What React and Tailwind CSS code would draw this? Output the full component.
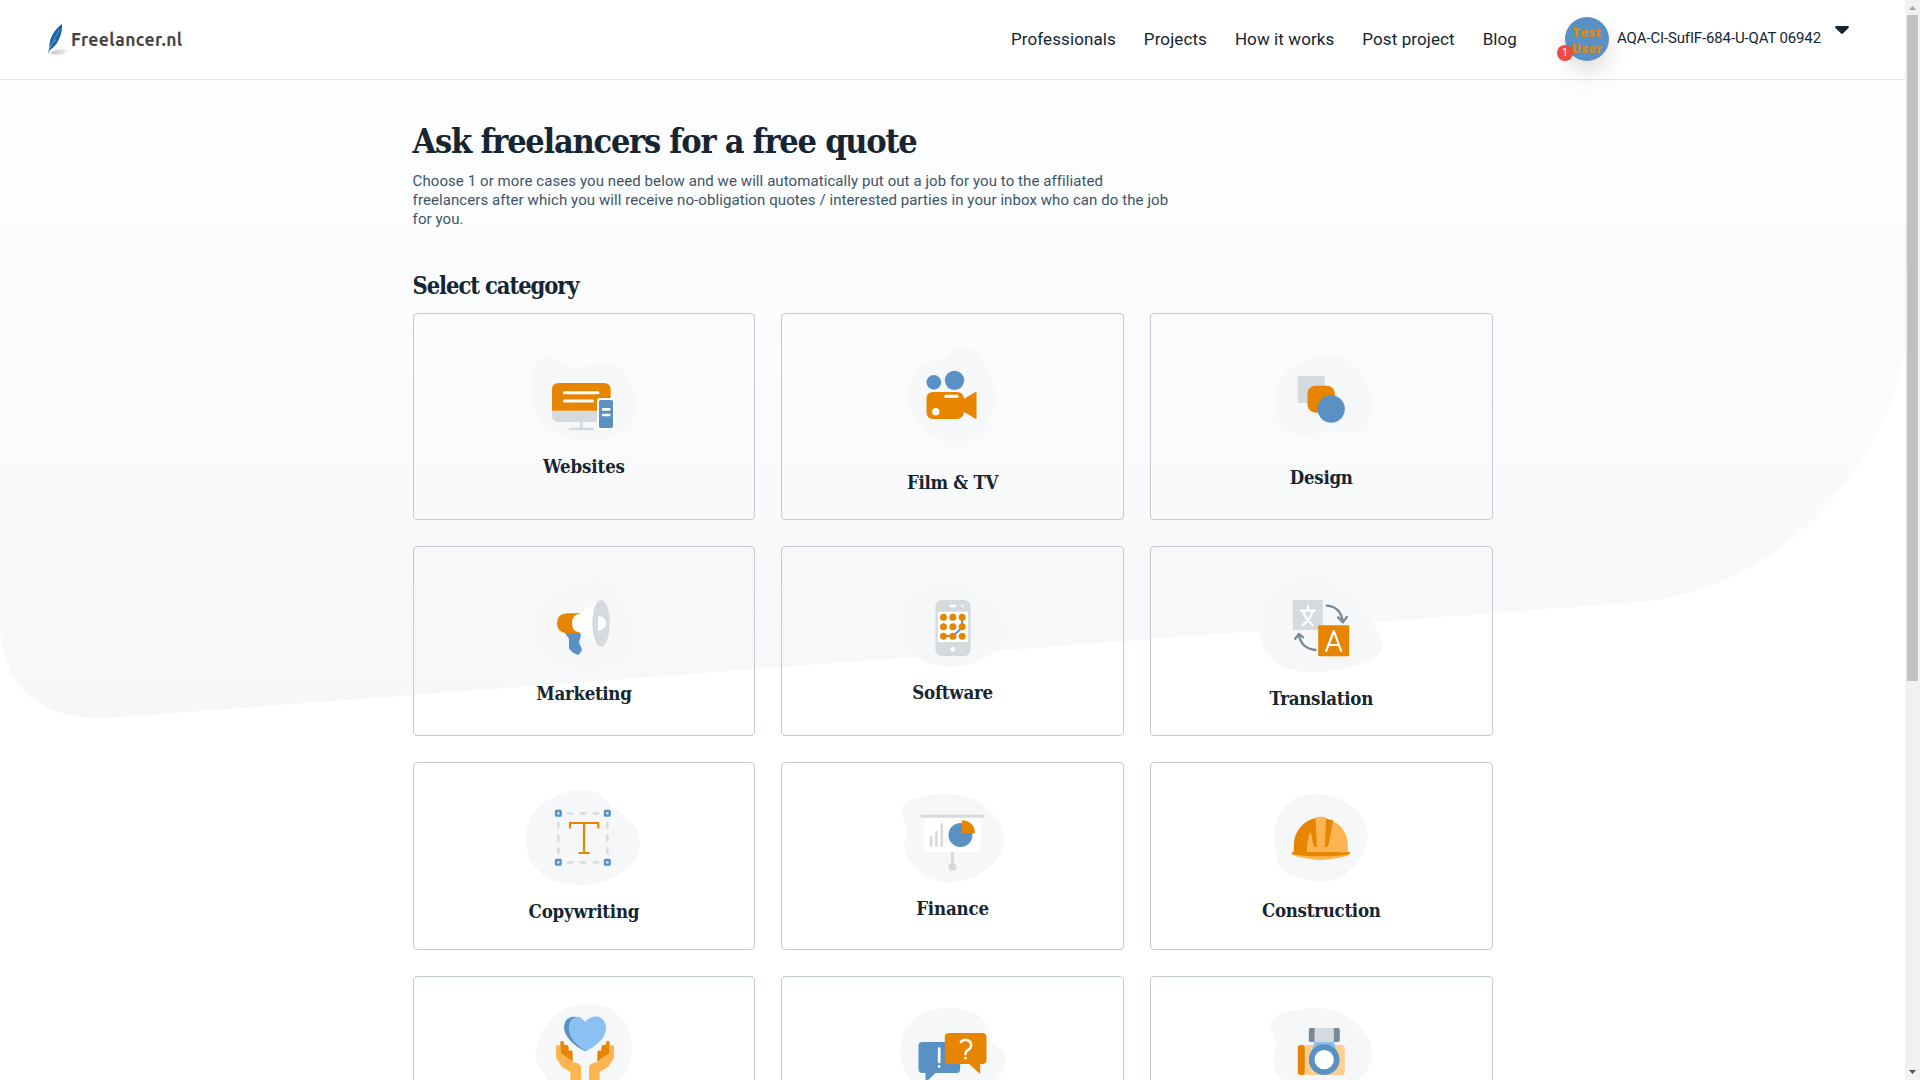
const BLUE = "#5a91c4";
const ORANGE = "#e88500";
const GREY = "#d5dade";
const BLOB = "#f5f7f9";
const AMBER = "#ffb452";
const SLATE = "#788a98";

function Websites() {
  return (
    <svg viewBox="12 -78 420 423" className="h-[141px] w-[140px]">
      <path fill={BLOB} d="M64 120C66 80 80 50 106 50C135 50 165 82 205 82C240 80 260 69 292 69C345 69 379 140 379 195C379 260 310 302 240 302C160 300 100 265 82 220C68 190 62 150 64 120Z" />
      <path fill={GREY} d="M126 212H302V246H146Q126 246 126 226Z" />
      <path fill={ORANGE} d="M146 129H282Q302 129 302 149V212H126V149Q126 129 146 129Z" />
      <path stroke="#fff" strokeWidth="9" strokeLinecap="round" d="M163 158H264M163 183H248" />
      <path stroke={GREY} strokeWidth="8" strokeLinecap="round" d="M214 246V266M180 267H248" />
      <rect x="261" y="174" width="54" height="96" rx="10" fill="#fff" />
      <rect x="267" y="180" width="42" height="84" rx="5" fill={BLUE} />
      <path stroke="#fff" strokeWidth="8" strokeLinecap="round" d="M279 208H298M279 225H298" />
    </svg>
  );
}

function Film() {
  return (
    <svg viewBox="1117.5 -78 420 471" className="h-[157px] w-[140px]">
      <path fill={BLOB} d="M1195 170C1195 120 1230 64 1268 63C1310 63 1320 20 1357 20C1410 20 1453 110 1453 175C1453 250 1400 306 1335 306C1280 306 1240 270 1222 243C1205 218 1195 205 1195 170Z" />
      <circle cx="1270" cy="127" r="22" fill={BLUE} />
      <circle cx="1332" cy="121" r="29" fill={BLUE} />
      <path fill={ORANGE} d="M1268 156H1340Q1357 156 1361 176L1396 155H1398V237H1396L1361 216Q1357 237 1340 237H1268Q1248 237 1248 217V176Q1248 156 1268 156Z" />
      <path stroke="#fff" strokeWidth="9" strokeLinecap="round" d="M1306 169H1340" />
      <circle cx="1276" cy="215" r="11" fill="#fff" />
    </svg>
  );
}

function Design() {
  return (
    <svg viewBox="33.5 -78 420 456" className="h-[152px] w-[140px]">
      <path fill={BLOB} d="M102 190C102 95 190 45 265 45C350 45 393 130 393 195C393 235 370 278 334 279C310 279 300 269 275 269C245 269 235 286 198 286C140 286 102 235 102 190Z" />
      <rect x="174" y="108" width="81" height="81" rx="2" fill={GREY} />
      <rect x="203" y="137" width="82" height="81" rx="24" fill={ORANGE} />
      <circle cx="274" cy="207" r="41" fill={BLUE} />
    </svg>
  );
}

function Marketing() {
  return (
    <svg viewBox="12 621 420 405" className="h-[135px] w-[140px]">
      <path fill={BLOB} d="M67 870C67 820 100 780 150 755C190 730 220 714 255 714C310 716 330 760 350 810C375 860 380 900 360 935C335 975 260 984 190 978C120 970 67 930 67 870Z" />
      <path fill={BLUE} d="M164 878H212V890L207 908L215 925V933L205 945L190 939L177 926V896Z" />
      <path fill={ORANGE} d="M170 820H212V880H170Q141 878 141 850Q141 822 170 820Z" />
      <path fill="#fff" d="M207 822L266 782V918L207 877Q186 874 186 850Q186 826 207 822Z" />
      <ellipse cx="273" cy="850" rx="26" ry="70" fill={GREY} />
      <path fill="#fff" d="M264 828Q288 830 288 850Q288 870 264 872Z" />
    </svg>
  );
}

function Software() {
  const cols = [1299, 1327, 1355];
  const rows = [832, 860, 889];
  return (
    <svg viewBox="1117.5 621 420 402" className="h-[134px] w-[140px]">
      <path fill={BLOB} d="M1170 850C1170 780 1240 718 1322 718C1370 722 1400 760 1430 785C1470 815 1485 850 1484 880C1478 935 1400 981 1322 981C1270 981 1235 965 1215 948C1185 925 1170 890 1170 850Z" />
      <rect x="1275" y="780" width="105" height="168" rx="18" fill={GREY} />
      <path stroke="#fff" strokeWidth="7" strokeLinecap="round" d="M1320 798H1335" />
      <circle cx="1356" cy="798" r="3.5" fill="#fff" />
      <rect x="1282" y="815" width="91" height="91" fill="#fff" />
      <path fill="none" stroke={BLUE} strokeWidth="6" d="M1299 888H1327L1355 863V832" />
      {rows.map((cy) => cols.map((cx) => <circle key={`${cx}-${cy}`} cx={cx} cy={cy} r="10.5" fill={ORANGE} />))}
      <circle cx="1327" cy="928" r="7" fill="#fff" />
    </svg>
  );
}

function Translation() {
  return (
    <svg viewBox="33.5 621 420 420" className="h-[140px] w-[140px]">
      <path fill={BLOB} d="M60 860C60 770 130 704 215 704C270 704 330 760 370 810C405 855 427 890 427 920C422 970 300 996 215 996C120 996 60 950 60 860Z" />
      <rect x="159" y="780" width="90" height="90" rx="2" fill={GREY} />
      <path fill="none" stroke="#fff" strokeWidth="7" strokeLinecap="round" d="M204 797V811M183 812H225M190 813Q196 838 219 855M218 813Q212 838 189 855" />
      <rect x="235" y="856" width="93" height="93" rx="3" fill={ORANGE} />
      <path fill="none" stroke="#fff" strokeWidth="6.5" strokeLinecap="round" strokeLinejoin="round" d="M259 933L282 873L304 933M268 915H296" />
      <path fill="none" stroke={SLATE} strokeWidth="7" strokeLinecap="round" strokeLinejoin="round" d="M261 797Q302 800 309 845M295 832L309 847L321 831M227 930Q184 926 177 884M166 896L177 882L190 892" />
    </svg>
  );
}

function Copywriting() {
  return (
    <svg viewBox="12 -51 420 411" className="h-[137px] w-[140px]">
      <path fill={BLOB} d="M48 180C48 120 75 80 115 60C150 40 180 30 222 30C275 32 290 65 312 85C345 110 390 135 390 190C390 260 300 316 215 316C110 316 48 260 48 180Z" />
      <path stroke="#d9dce1" strokeWidth="8" strokeLinecap="round" d="M174 100H187M212 100H226M251 100H264M174 247H187M212 247H226M251 247H264M145 129V142M145 167V181M145 206V219M292 129V142M292 167V181M292 206V219" />
      {[[145, 100], [292, 100], [145, 247], [292, 247]].map(([x, y]) => (
        <rect key={`${x}-${y}`} x={x - 7} y={y - 7} width="14" height="14" rx="1" fill="#dbe8f4" stroke={BLUE} strokeWidth="7" />
      ))}
      <path fill="none" stroke={ORANGE} strokeWidth="6.5" strokeLinecap="round" strokeLinejoin="round" d="M180 143V129H265V143M222 129V219M208 219H237" />
    </svg>
  );
}

function Finance() {
  return (
    <svg viewBox="1117.5 -51 420 402" className="h-[134px] w-[140px]">
      <path fill={BLOB} d="M1173 95C1175 55 1240 42 1315 42C1410 42 1481 115 1481 180C1475 250 1400 308 1315 308C1250 308 1210 260 1190 230C1172 195 1187 190 1190 160C1192 130 1173 120 1173 95Z" />
      <rect x="1242" y="110" width="168" height="106" fill="#fff" />
      <path stroke={GREY} strokeWidth="9" strokeLinecap="round" d="M1234 109H1418" />
      <path stroke={GREY} strokeWidth="8" strokeLinecap="round" d="M1262 172V197M1278 156V197M1294 132V197" />
      <path stroke={GREY} strokeWidth="9" d="M1326 216V255" />
      <circle cx="1326" cy="261" r="12" fill={GREY} />
      <circle cx="1350" cy="165" r="36" fill={BLUE} />
      <path fill={ORANGE} d="M1354 121Q1391 123 1394 160H1354Z" />
    </svg>
  );
}

function Construction() {
  return (
    <svg viewBox="333.5 24 420 408" className="h-[136px] w-[140px]">
      <path fill={BLOB} d="M404 240C404 170 455 117 530 117C610 117 683 175 683 240C683 300 620 381 552 381C530 381 515 376 485 373C420 365 410 320 406 280Z" />
      <path fill={AMBER} d="M456 296Q460 307 543 315Q626 307 630 296Z" />
      <path fill={ORANGE} d="M462 292V268C464 225 495 196 528 189L579 196L600 292L630 291V297Q600 304 543 304Q486 304 456 297V291Z" />
      <path fill={AMBER} d="M501 291C502 262 506 240 512 230C518 240 518 262 522 272Q524 276 530 276H556Q565 276 567 264L579 198C606 210 624 238 624 270V291Z" />
      <path fill={ORANGE} d="M512 230L528 190L532 276Q524 276 522 272C518 262 518 240 512 230Z" />
      <path fill={ORANGE} d="M558 190L579 198L567 264Q565 276 554 276Z" />
      <path fill={AMBER} d="M527 192Q528 185 535 185H551Q558 185 559 192L555 274Q554 277 551 277H535Q532 277 531 274Z" />
    </svg>
  );
}

function Hand() {
  return (
    <>
      <path fill={ORANGE} d="M151 830V787Q151 783 156 783Q162 783 162 788V795Q175 793 176 801V812Q188 807 188 818V846Z" />
      <path fill={AMBER} d="M138 800Q138 795 144 795Q150 795 151 800V818L183 840V846Q213 848 213 862V950H181V876L156 861L138 834Z" />
    </>
  );
}

function Care() {
  return (
    <svg viewBox="12 591 420 420" className="h-[140px] w-[140px]">
      <path fill={BLOB} d="M76 823C80 760 140 670 230 670C315 670 365 730 365 800C365 850 345 890 310 920C270 970 180 970 130 935C110 905 110 890 95 870C82 850 76 840 76 823Z" />
      <path fill={BLUE} d="M225 814C190 798 162 768 162 742C164 712 185 705 212 713L250 800Z" />
      <path fill="#8ac0f2" d="M228 813C195 795 176 768 176 740C180 710 208 700 225 726C245 700 287 704 288 744C288 774 262 796 228 813Z" />
      <Hand />
      <g transform="translate(450 0) scale(-1 1)">
        <Hand />
      </g>
    </svg>
  );
}

function Advice() {
  return (
    <svg viewBox="1117.5 591 420 420" className="h-[140px] w-[140px]">
      <path fill={BLOB} d="M1170 810C1170 740 1220 684 1310 684C1400 684 1425 710 1433 755C1440 810 1480 790 1485 840C1482 910 1400 950 1322 950C1240 950 1170 900 1170 810Z" />
      <path fill={BLUE} d="M1236 786H1338Q1349 786 1349 798V867Q1349 879 1338 879H1275L1245 908V879H1236Q1224 879 1224 867V798Q1224 786 1236 786Z" />
      <path stroke="#fff" strokeWidth="8" strokeLinecap="round" d="M1286 806V846M1286 859V860" />
      <path fill={ORANGE} d="M1315 759H1416Q1428 759 1428 771V840Q1428 852 1416 852H1409V882L1376 852H1315Q1303 852 1303 840V771Q1303 759 1315 759Z" />
      <path fill="none" stroke="#fff" strokeWidth="7.5" strokeLinecap="round" d="M1351 786Q1356 779 1366 779Q1382 781 1382 797Q1381 806 1371 811Q1365 814 1365 822M1365 834V834.5" />
    </svg>
  );
}

function Photography() {
  return (
    <svg viewBox="333.5 666 420 420" className="h-[140px] w-[140px]">
      <path fill={BLOB} d="M391 812C395 775 460 759 530 759C620 759 698 835 698 895C695 970 610 1025 530 1025C470 1025 430 980 405 945C388 905 408 905 408 875C406 845 391 835 391 812Z" />
      <rect x="474" y="870" width="141" height="90" rx="9" fill="#ffcf91" />
      <rect x="474" y="870" width="21" height="90" rx="9" fill={ORANGE} />
      <path fill="#8fbfe9" d="M524 860H582L594 900H512Z" />
      <rect x="507" y="819" width="93" height="42" rx="5" fill={SLATE} />
      <rect x="524" y="819" width="58" height="42" fill={GREY} />
      <circle cx="553" cy="914" r="37.5" fill="#fff" stroke={BLUE} strokeWidth="17" />
    </svg>
  );
}

const categories = [
  { Icon: Websites, name: "Websites", spacing: "tracking-[-0.1px]" },
  { Icon: Film, name: "Film & TV", spacing: "tracking-[-0.3px]" },
  { Icon: Design, name: "Design", spacing: "tracking-[-0.25px]" },
  { Icon: Marketing, name: "Marketing", spacing: "tracking-[-0.3px]" },
  { Icon: Software, name: "Software", spacing: "tracking-[-0.2px]" },
  { Icon: Translation, name: "Translation", spacing: "tracking-[-0.25px]" },
  { Icon: Copywriting, name: "Copywriting", spacing: "tracking-[-0.2px]" },
  { Icon: Finance, name: "Finance", spacing: "tracking-[-0.15px]" },
  { Icon: Construction, name: "Construction", spacing: "tracking-[-0.25px]" },
  { Icon: Care },
  { Icon: Advice },
  { Icon: Photography },
];

function Header() {
  return (
    <header className="flex h-20 shrink-0 items-start border-b border-[#e4e7e8] bg-white">
      <a className="ml-12 flex pt-6">
        <svg viewBox="0 0 24 32" className="h-8 w-6">
          <defs>
            <linearGradient id="shade" x1="0" x2="1">
              <stop offset="0" stopColor="#bdbdbd" />
              <stop offset="1" stopColor="#fff" />
            </linearGradient>
          </defs>
          <path fill="url(#shade)" d="M2 29C7 25 15 24 23 26.500C18 31 8 32 2 29Z" />
          <path fill="#1765a5" d="M14 0C7 5 1 14 1.500 23L0 30L2 26C9 22 15 10 14 0Z" />
          <path fill="none" stroke="#8fbce0" strokeWidth=".6" d="M1.500 25C5 18 8 11 12 5M4 19L8 16" />
        </svg>
        <span className="font-['Ubuntu','Open_Sans',sans-serif] mt-[4px] -ml-[1px] text-[17.500px] leading-6 font-bold tracking-[0.4px] text-[#444]">Freelancer.nl</span>
      </a>
      <nav className="ml-auto flex gap-[28px] pt-[27px] text-[17px] leading-6 tracking-[0.09px] text-[#152532]">
        <a>Professionals</a>
        <a>Projects</a>
        <a>How it works</a>
        <a>Post project</a>
        <a>Blog</a>
      </nav>
      <div className="ml-[48px] flex w-[340px] text-[#152532]">
        <div className="relative mt-[17px] flex size-11 flex-col items-center rounded-full bg-[#5a91c4] pt-[8px] font-['Open_Sans',sans-serif] text-[12.500px] leading-4 font-extrabold tracking-[0.4px] text-[#e88500] shadow-[0_12px_22px_rgba(0,0,0,0.13)]">
          <span>Test</span>
          <span>User</span>
          <span className="absolute top-[28px] -left-[8px] flex size-4 items-center justify-center rounded-full bg-[#eb4b42] font-['Roboto',sans-serif] text-[10px] font-normal tracking-normal text-white">1</span>
        </div>
        <span className="mt-[26px] ml-[8px] text-[15px] leading-6 tracking-[-0.14px]">AQA-CI-SufIF-684-U-QAT 06942</span>
        <svg viewBox="0 0 14 8" className="mt-[26px] ml-[14px] h-2 w-[14px]">
          <path fill="#152532" d="M1 0H13Q14.500 .5 13.500 2L8 7.500Q7 8.400 6 7.500L.5 2Q-.5 .5 1 0Z" />
        </svg>
      </div>
    </header>
  );
}

export default function App() {
  return (
    <div className="flex h-[1080px] w-[1920px] overflow-hidden bg-white font-['Roboto',sans-serif]">
      <div className="relative isolate flex min-w-0 flex-1 flex-col overflow-hidden">
        <svg viewBox="0 0 1905 720" className="absolute top-0 left-0 -z-10 h-[720px] w-[1905px]">
          <defs>
            <linearGradient id="backdrop" x1="0" x2="0" y1="0" y2="1">
              <stop offset="0" stopColor="#fcfefe" />
              <stop offset=".35" stopColor="#fbfcfe" />
              <stop offset="1" stopColor="#f6f7f9" />
            </linearGradient>
          </defs>
          <path fill="url(#backdrop)" d="M0 80H1905V350C1892 445 1795 588 1640 602L110 718C45 722 0 690 0 620Z" />
        </svg>
        <Header />
        <main className="ml-[412.600px] w-[1080px] shrink-0">
          <h1 className="mt-[37px] font-['DejaVu_Serif_Condensed','DejaVu_Serif',serif] text-[34px] leading-[48px] font-bold tracking-[-1.25px] whitespace-nowrap text-[#152532]">Ask freelancers for a free quote</h1>
          <p className="mt-[7px] w-[762px] text-[15px] leading-[19px] tracking-[0.08px] text-[#3f5467]">
            Choose 1 or more cases you need below and we will automatically put out a job for you to the affiliated freelancers after which you will receive no-obligation quotes / interested parties in your inbox who can do the job for you.
          </p>
          <h2 className="mt-[41px] font-['DejaVu_Serif_Condensed','DejaVu_Serif',serif] text-[23.500px] leading-8 font-bold tracking-[-1.1px] whitespace-nowrap text-[#152532]">Select category</h2>
          <div className="mt-[11px] grid grid-cols-3 grid-rows-[207px_190px_188px_190px] gap-[26px]">
            {categories.map(({ Icon, name, spacing }, i) => (
              <a key={i} className="flex flex-col items-center rounded border border-[#c3cad2]">
                <Icon />
                {name && <span className={`font-['DejaVu_Serif_Condensed','DejaVu_Serif',serif] text-[18.500px] leading-6 font-bold whitespace-nowrap text-[#152532] ${spacing}`}>{name}</span>}
              </a>
            ))}
          </div>
        </main>
      </div>
      <div className="flex w-[15px] shrink-0 flex-col items-center bg-[#f1f1f1]">
        <svg viewBox="0 0 15 15" className="size-[15px]"><path fill="#a3a3a3" d="M4 10L7.500 6L11 10Z" /></svg>
        <div className="h-[666px] w-[11px] bg-[#c1c1c1]" />
        <svg viewBox="0 0 15 15" className="mt-auto size-[15px]"><path fill="#505050" d="M4 5L7.500 9L11 5Z" /></svg>
      </div>
    </div>
  );
}
